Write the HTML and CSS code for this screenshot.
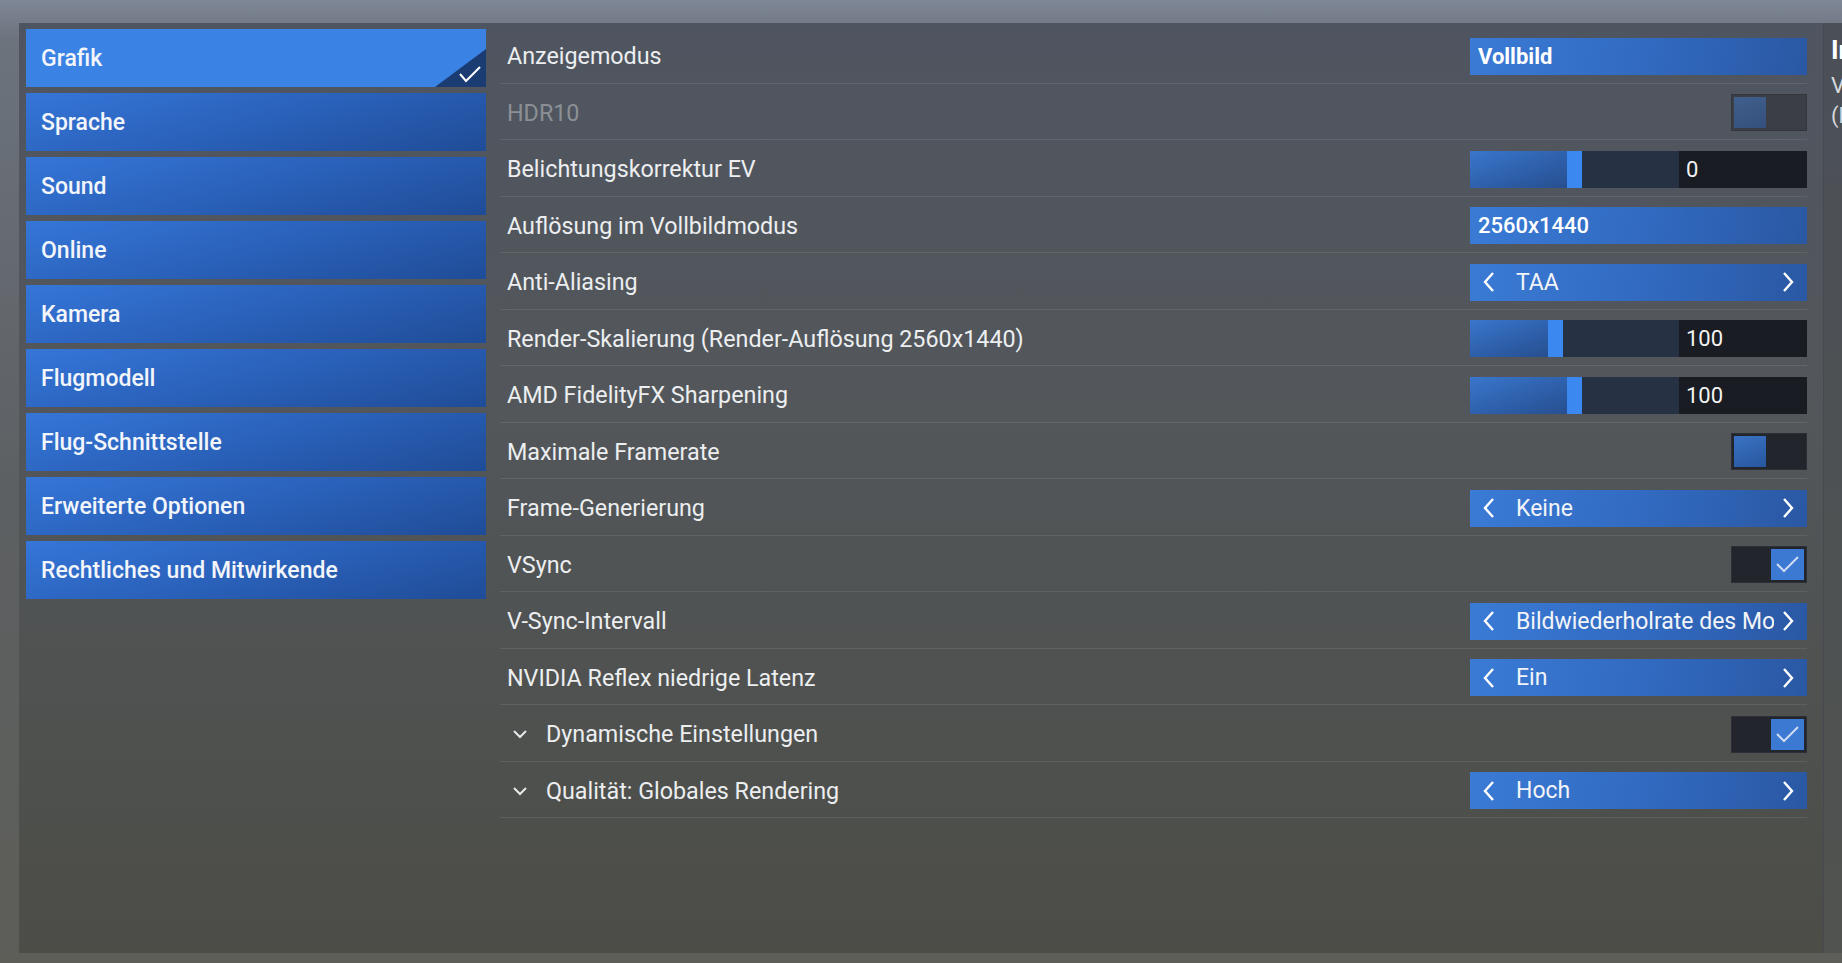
FILE: index.html
```html
<!DOCTYPE html>
<html lang="de">
<head>
    <meta charset="UTF-8">
    <title>Optionen - Grafik</title>
    <link rel="stylesheet" href="styles.css">
</head>
<body>
    <div class="screen">
        <div class="panel">
            <!-- Kategorien -->
            <nav class="nav">
                <div class="nav-item active">
                    Grafik
                    <span class="corner">
                        <svg width="51" height="38" viewBox="0 0 51 38"><path d="M25 25 L31 32 L45 18" fill="none" stroke="#fff" stroke-width="2"/></svg>
                    </span>
                </div>
                <div class="nav-item">Sprache</div>
                <div class="nav-item">Sound</div>
                <div class="nav-item">Online</div>
                <div class="nav-item">Kamera</div>
                <div class="nav-item">Flugmodell</div>
                <div class="nav-item">Flug-Schnittstelle</div>
                <div class="nav-item">Erweiterte Optionen</div>
                <div class="nav-item">Rechtliches und Mitwirkende</div>
            </nav>

            <!-- Einstellungen -->
            <div class="settings">
                <div class="row">
                    <span class="label">Anzeigemodus</span>
                    <div class="dropdown strong">Vollbild</div>
                </div>
                <div class="row">
                    <span class="label disabled">HDR10</span>
                    <div class="toggle disabled"><span class="knob"></span></div>
                </div>
                <div class="row">
                    <span class="label">Belichtungskorrektur EV</span>
                    <div class="slider">
                        <div class="track"><span class="fill" style="width: 97px"></span><span class="thumb"></span></div>
                        <div class="value">0</div>
                    </div>
                </div>
                <div class="row">
                    <span class="label">Auflösung im Vollbildmodus</span>
                    <div class="dropdown">2560x1440</div>
                </div>
                <div class="row">
                    <span class="label">Anti-Aliasing</span>
                    <div class="selector">
                        <svg class="arrow" width="14" height="24" viewBox="0 0 14 24"><path d="M11 3 L3 12 L11 21" /></svg>
                        <span class="choice">TAA</span>
                        <svg class="arrow" width="14" height="24" viewBox="0 0 14 24"><path d="M3 3 L11 12 L3 21" /></svg>
                    </div>
                </div>
                <div class="row">
                    <span class="label">Render-Skalierung (Render-Auflösung 2560x1440)</span>
                    <div class="slider">
                        <div class="track"><span class="fill" style="width: 78px"></span><span class="thumb"></span></div>
                        <div class="value">100</div>
                    </div>
                </div>
                <div class="row">
                    <span class="label">AMD FidelityFX Sharpening</span>
                    <div class="slider">
                        <div class="track"><span class="fill" style="width: 97px"></span><span class="thumb"></span></div>
                        <div class="value">100</div>
                    </div>
                </div>
                <div class="row">
                    <span class="label">Maximale Framerate</span>
                    <div class="toggle"><span class="knob"></span></div>
                </div>
                <div class="row">
                    <span class="label">Frame-Generierung</span>
                    <div class="selector">
                        <svg class="arrow" width="14" height="24" viewBox="0 0 14 24"><path d="M11 3 L3 12 L11 21" /></svg>
                        <span class="choice">Keine</span>
                        <svg class="arrow" width="14" height="24" viewBox="0 0 14 24"><path d="M3 3 L11 12 L3 21" /></svg>
                    </div>
                </div>
                <div class="row">
                    <span class="label">VSync</span>
                    <div class="toggle on">
                        <span class="knob"><svg width="33" height="31" viewBox="0 0 33 31"><path d="M6 15 L13 22 L27 8" fill="none" stroke="#cddcf2" stroke-width="2"/></svg></span>
                    </div>
                </div>
                <div class="row">
                    <span class="label">V-Sync-Intervall</span>
                    <div class="selector">
                        <svg class="arrow" width="14" height="24" viewBox="0 0 14 24"><path d="M11 3 L3 12 L11 21" /></svg>
                        <span class="choice">Bildwiederholrate des Monitors</span>
                        <svg class="arrow" width="14" height="24" viewBox="0 0 14 24"><path d="M3 3 L11 12 L3 21" /></svg>
                    </div>
                </div>
                <div class="row">
                    <span class="label">NVIDIA Reflex niedrige Latenz</span>
                    <div class="selector">
                        <svg class="arrow" width="14" height="24" viewBox="0 0 14 24"><path d="M11 3 L3 12 L11 21" /></svg>
                        <span class="choice">Ein</span>
                        <svg class="arrow" width="14" height="24" viewBox="0 0 14 24"><path d="M3 3 L11 12 L3 21" /></svg>
                    </div>
                </div>
                <div class="row">
                    <span class="label group">
                        <svg class="expand" width="16" height="10" viewBox="0 0 16 10"><path d="M2 2 L8 8 L14 2" /></svg>
                        Dynamische Einstellungen
                    </span>
                    <div class="toggle on">
                        <span class="knob"><svg width="33" height="31" viewBox="0 0 33 31"><path d="M6 15 L13 22 L27 8" fill="none" stroke="#cddcf2" stroke-width="2"/></svg></span>
                    </div>
                </div>
                <div class="row">
                    <span class="label group">
                        <svg class="expand" width="16" height="10" viewBox="0 0 16 10"><path d="M2 2 L8 8 L14 2" /></svg>
                        Qualität: Globales Rendering
                    </span>
                    <div class="selector">
                        <svg class="arrow" width="14" height="24" viewBox="0 0 14 24"><path d="M11 3 L3 12 L11 21" /></svg>
                        <span class="choice">Hoch</span>
                        <svg class="arrow" width="14" height="24" viewBox="0 0 14 24"><path d="M3 3 L11 12 L3 21" /></svg>
                    </div>
                </div>
            </div>
        </div>

        <!-- Beschreibung, vom Bildrand abgeschnitten -->
        <aside class="info">
            <div class="info-title">Info</div>
            <div class="info-text">Vollbild</div>
            <div class="info-text">(Fenster)</div>
        </aside>
    </div>
</body>
</html>
```

FILE: styles.css
```css
body {
    margin: 0;
    width: 1842px;
    height: 963px;
    overflow: hidden;
    font-family: Roboto, "Noto Sans", sans-serif;
    background: linear-gradient(180deg, #7e8796 0px, #6c737d 40px, #5d6063 50%, #5d5e58 100%);
}

.screen {
    display: flex;
    padding: 23px 0 0 19px;
    height: 930px;
}

.panel {
    display: flex;
    width: 1804px;
    height: 930px;
    background: linear-gradient(180deg, #4f5560 0%, #53575b 40%, #4c4d47 100%);
}

/* left navigation */
.nav {
    width: 480px;
    padding: 6px 13px 0 7px;
    box-sizing: border-box;
    display: flex;
    flex-direction: column;
    gap: 6px;
}

.nav-item {
    position: relative;
    height: 58px;
    display: flex;
    align-items: center;
    padding-left: 15px;
    color: #f2f5fa;
    font-size: 23px;
    font-weight: 500;
    background: linear-gradient(165deg, #3576d8 0%, #2b63bd 45%, #1f4c97 100%);
}

.nav-item.active {
    background: #3a82e4;
}

.corner {
    position: absolute;
    right: 0;
    bottom: 0;
    width: 51px;
    height: 38px;
    background: #1b3c72;
    clip-path: polygon(100% 0, 100% 100%, 0 100%);
}

.corner svg {
    display: block;
}

/* settings list */
.settings {
    flex: 1;
    padding: 4px 16px 0 1px;
}

.row {
    height: 56.5px;
    box-sizing: border-box;
    padding: 3px 0 0 7px;
    display: flex;
    align-items: center;
    justify-content: space-between;
    border-bottom: 1.5px solid rgba(255, 255, 255, 0.09);
}

.label {
    color: #eceef0;
    font-size: 23.3px;
}

.label.disabled {
    color: #8b9096;
}

.label.group {
    display: flex;
    align-items: center;
}

.expand {
    margin: 0 18px 0 5px;
}

.expand path {
    fill: none;
    stroke: #e6e8ea;
    stroke-width: 2;
}

/* controls */
.dropdown,
.selector,
.slider {
    width: 337px;
    height: 37px;
    box-sizing: border-box;
}

.dropdown {
    display: flex;
    align-items: center;
    padding-left: 8px;
    color: #fff;
    font-size: 22px;
    font-weight: 500;
    background: linear-gradient(100deg, #3a7bd6 0%, #3169bf 55%, #2a58a3 100%);
}

.dropdown.strong {
    font-weight: 700;
}

.selector {
    display: flex;
    align-items: center;
    padding: 0 12px;
    color: #f2f4f8;
    font-size: 23px;
    background: linear-gradient(100deg, #3a7bd6 0%, #3169bf 55%, #2a58a3 100%);
}

.selector .choice {
    flex: 1;
    margin: 0 7px 0 20px;
    overflow: hidden;
    white-space: nowrap;
}

.arrow {
    flex: none;
}

.arrow path {
    fill: none;
    stroke: #fff;
    stroke-width: 2.4;
}

.slider {
    display: flex;
}

.track {
    width: 209px;
    display: flex;
    background: #263244;
}

.fill {
    height: 100%;
    background: linear-gradient(160deg, #3a76cc 0%, #2d5ea8 60%, #274f8f 100%);
}

.thumb {
    width: 15px;
    height: 100%;
    background: #3a88f0;
}

.value {
    flex: 1;
    display: flex;
    align-items: center;
    padding-left: 7px;
    color: #f2f2f2;
    font-size: 22px;
    background: #191c22;
}

.toggle {
    width: 76px;
    height: 37px;
    box-sizing: border-box;
    padding: 2px;
    display: flex;
    background: #22252b;
    border: 1px solid #2c3036;
}

.toggle .knob {
    width: 32px;
    height: 31px;
    background: linear-gradient(160deg, #3a72c4, #27579e);
}

.toggle.on {
    justify-content: flex-end;
}

.toggle.on .knob {
    width: 33px;
    height: 31px;
    background: #3b79d2;
}

.toggle.on svg {
    display: block;
}

.toggle.disabled {
    background: #3b3e45;
    border-color: #33363c;
}

.toggle.disabled .knob {
    background: linear-gradient(160deg, #415f8c, #34507c);
}

/* description panel, clipped at the window edge */
.info {
    width: 19px;
    height: 930px;
    overflow: hidden;
    white-space: nowrap;
    padding: 12px 0 0 7px;
    box-sizing: border-box;
    background: linear-gradient(180deg, #4b5058 0%, #50534f 100%);
    border-left: 1px solid #464a50;
}

.info-title {
    color: #fff;
    font-size: 26px;
    font-weight: 700;
    margin-bottom: 6px;
}

.info-text {
    color: #d6d8dc;
    font-size: 22px;
    line-height: 30px;
}
```
